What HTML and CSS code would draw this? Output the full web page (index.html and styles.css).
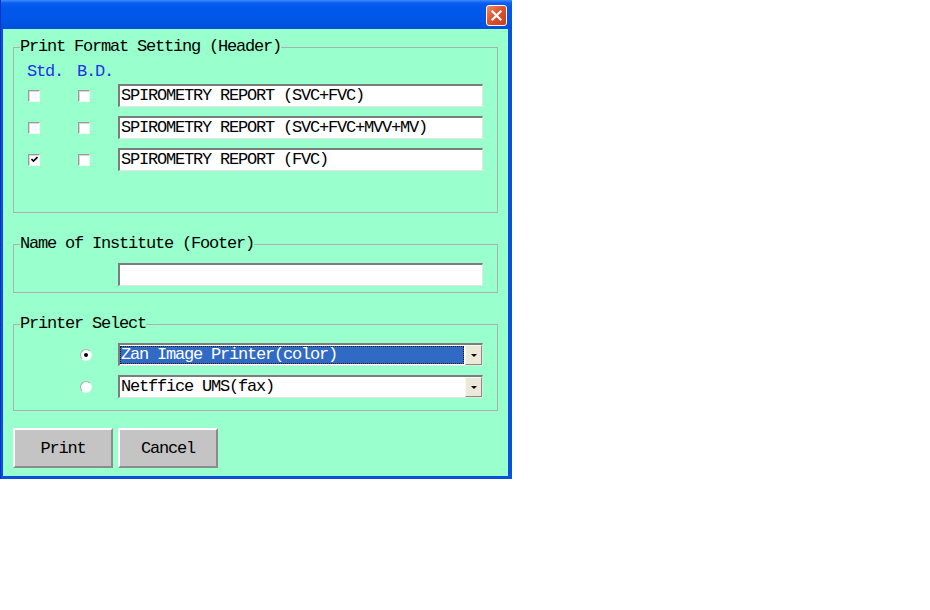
FILE: index.html
```html
<!DOCTYPE html>
<html>
<head>
<meta charset="utf-8">
<title>Print Setting</title>
<link rel="stylesheet" href="styles.css">
</head>
<body>
<div class="window">
  <div class="titlebar">
    <div class="close">
      <svg width="13" height="13" viewBox="0 0 13 13"><path d="M2.5 2.5 L10.5 10.5 M10.5 2.5 L2.5 10.5" stroke="#fff" stroke-width="2.2" stroke-linecap="square"/></svg>
    </div>
  </div>
  <div class="client">
    <fieldset class="group group-header">
      <legend>Print Format Setting (Header)</legend>
      <div class="colhead">
        <span class="col-label">Std.</span>
        <span class="col-label">B.D.</span>
      </div>
      <div class="rows">
        <div class="row">
          <span class="check"></span>
          <span class="check"></span>
          <div class="field">SPIROMETRY REPORT (SVC+FVC)</div>
        </div>
        <div class="row">
          <span class="check"></span>
          <span class="check"></span>
          <div class="field">SPIROMETRY REPORT (SVC+FVC+MVV+MV)</div>
        </div>
        <div class="row">
          <span class="check checked">
            <svg width="7" height="7" viewBox="0 0 7 7"><path d="M0.5 3 L2.5 5 L6.5 1" stroke="#000" stroke-width="1.6" fill="none"/></svg>
          </span>
          <span class="check"></span>
          <div class="field">SPIROMETRY REPORT (FVC)</div>
        </div>
      </div>
    </fieldset>

    <fieldset class="group group-footer">
      <legend>Name of Institute (Footer)</legend>
      <div class="field footer-field"></div>
    </fieldset>

    <fieldset class="group group-printer">
      <legend>Printer Select</legend>
      <div class="printer-rows">
        <div class="printer-row">
          <span class="radio selected"><span class="dot"></span></span>
          <div class="select active">
            <div class="value"><span class="hl">Zan Image Printer(color)</span></div>
            <div class="drop"><span class="tri"></span></div>
          </div>
        </div>
        <div class="printer-row">
          <span class="radio"></span>
          <div class="select">
            <div class="value"><span class="hl">Netffice UMS(fax)</span></div>
            <div class="drop"><span class="tri"></span></div>
          </div>
        </div>
      </div>
    </fieldset>

    <div class="buttons">
      <button class="btn">Print</button>
      <button class="btn">Cancel</button>
    </div>
  </div>
</div>
</body>
</html>
```

FILE: styles.css
```css
body {
  margin: 0;
  background: #ffffff;
  font-family: "Liberation Mono", "DejaVu Sans Mono", monospace;
  font-size: 17px;
  letter-spacing: -1.2px;
  color: #000;
}

.window {
  width: 512px;
  height: 479px;
  display: flex;
  flex-direction: column;
  background: #0A4FDE;
  border-left: 1px solid #0831C8;
  box-sizing: border-box;
}

.titlebar {
  height: 29px;
  flex: none;
  display: flex;
  justify-content: flex-end;
  align-items: flex-start;
  padding: 5px 5px 0 0;
  box-sizing: border-box;
  background: linear-gradient(#3C8CFF 0px, #0A5EEE 3px, #0058EB 8px, #0056E6 20px, #0051DC 29px);
}

.close {
  width: 21px;
  height: 21px;
  box-sizing: border-box;
  border: 1px solid #ffffff;
  border-radius: 3px;
  background: linear-gradient(135deg, #F08A6A 0%, #E0532F 45%, #C83E1C 100%);
  display: flex;
  align-items: center;
  justify-content: center;
}

.client {
  flex: 1;
  margin: 0 4px 3px 2px;
  background: #99FFCC;
  padding: 9px 10px 0 10px;
  display: flex;
  flex-direction: column;
}

.group {
  margin: 0;
  padding: 0 0 0 6px;
  border: 1px solid #A9B3AD;
  box-sizing: border-box;
  min-width: 0;
}

.group + .group {
  margin-top: 22px;
}

.group legend {
  padding: 0;
  line-height: 18px;
  height: 18px;
}

.group-header {
  height: 175px;
}

.group-footer {
  height: 58px;
}

.group-printer {
  height: 96px;
}

.colhead {
  display: flex;
  margin: 7px 0 3px 7px;
  height: 18px;
  line-height: 18px;
}

.col-label {
  color: #1E32E6;
  width: 50px;
}

.rows {
  display: flex;
  flex-direction: column;
  gap: 9px;
  margin-left: 7px;
}

.row {
  display: grid;
  grid-template-columns: 50px 41px 365px;
  align-items: center;
  height: 23px;
}

.check {
  width: 12px;
  height: 12px;
  margin-left: 1px;
  box-sizing: border-box;
  background: #ffffff;
  border-style: solid;
  border-width: 1px;
  border-color: #9A9A9A #F4F4F4 #F4F4F4 #9A9A9A;
  box-shadow: inset 1px 1px 0 #D6D6D6;
  display: flex;
  align-items: center;
  justify-content: center;
}

.field {
  width: 365px;
  height: 23px;
  box-sizing: border-box;
  background: #ffffff;
  border-style: solid;
  border-width: 2px 1px 1px 2px;
  border-color: #7C7C7C #E4E4E4 #E4E4E4 #7C7C7C;
  padding-left: 1px;
  line-height: 20px;
  white-space: nowrap;
  overflow: hidden;
}

.footer-field {
  margin: 10px 0 0 98px;
}

.printer-rows {
  display: flex;
  flex-direction: column;
  gap: 9px;
  margin: 10px 0 0 60px;
}

.printer-row {
  display: flex;
  align-items: center;
  gap: 26px;
}

.radio {
  width: 12px;
  height: 12px;
  border-radius: 50%;
  box-sizing: border-box;
  background: radial-gradient(circle at 60% 60%, #ffffff 0%, #ffffff 45%, #E6E6E6 100%);
  border: 1px solid;
  border-color: #B0B0B0 #F4F4F4 #F4F4F4 #B0B0B0;
  display: flex;
  align-items: center;
  justify-content: center;
}

.radio .dot {
  width: 4px;
  height: 4px;
  border-radius: 50%;
  background: #000;
}

.select {
  width: 365px;
  height: 23px;
  box-sizing: border-box;
  background: #ffffff;
  border-style: solid;
  border-width: 2px 1px 1px 2px;
  border-color: #7C7C7C #E4E4E4 #E4E4E4 #7C7C7C;
  display: flex;
}

.select .value {
  flex: 1;
  display: flex;
  padding: 1px 1px 1px 0;
  min-width: 0;
}

.select .hl {
  flex: 1;
  line-height: 18px;
  padding-left: 1px;
  white-space: nowrap;
}

.select.active .hl {
  background: #316AC5;
  color: #ffffff;
  outline: 1px dotted #1A1A1A;
  outline-offset: -1px;
}

.drop {
  width: 17px;
  flex: none;
  box-sizing: border-box;
  background: #ECE9D8;
  border-style: solid;
  border-width: 1px;
  border-color: #F8F8F4 #8A8A80 #8A8A80 #F8F8F4;
  display: flex;
  align-items: center;
  justify-content: center;
}

.tri {
  width: 0;
  height: 0;
  border-left: 3px solid transparent;
  border-right: 3px solid transparent;
  border-top: 3px solid #000;
}

.buttons {
  display: flex;
  gap: 5px;
  margin-top: 17px;
}

.btn {
  width: 100px;
  height: 40px;
  box-sizing: border-box;
  margin: 0;
  padding: 0;
  font: inherit;
  letter-spacing: inherit;
  color: #000;
  background: #C4C4C4;
  border-style: solid;
  border-width: 2px;
  border-color: #FFFFFF #8C8C8C #8C8C8C #FFFFFF;
}
```
